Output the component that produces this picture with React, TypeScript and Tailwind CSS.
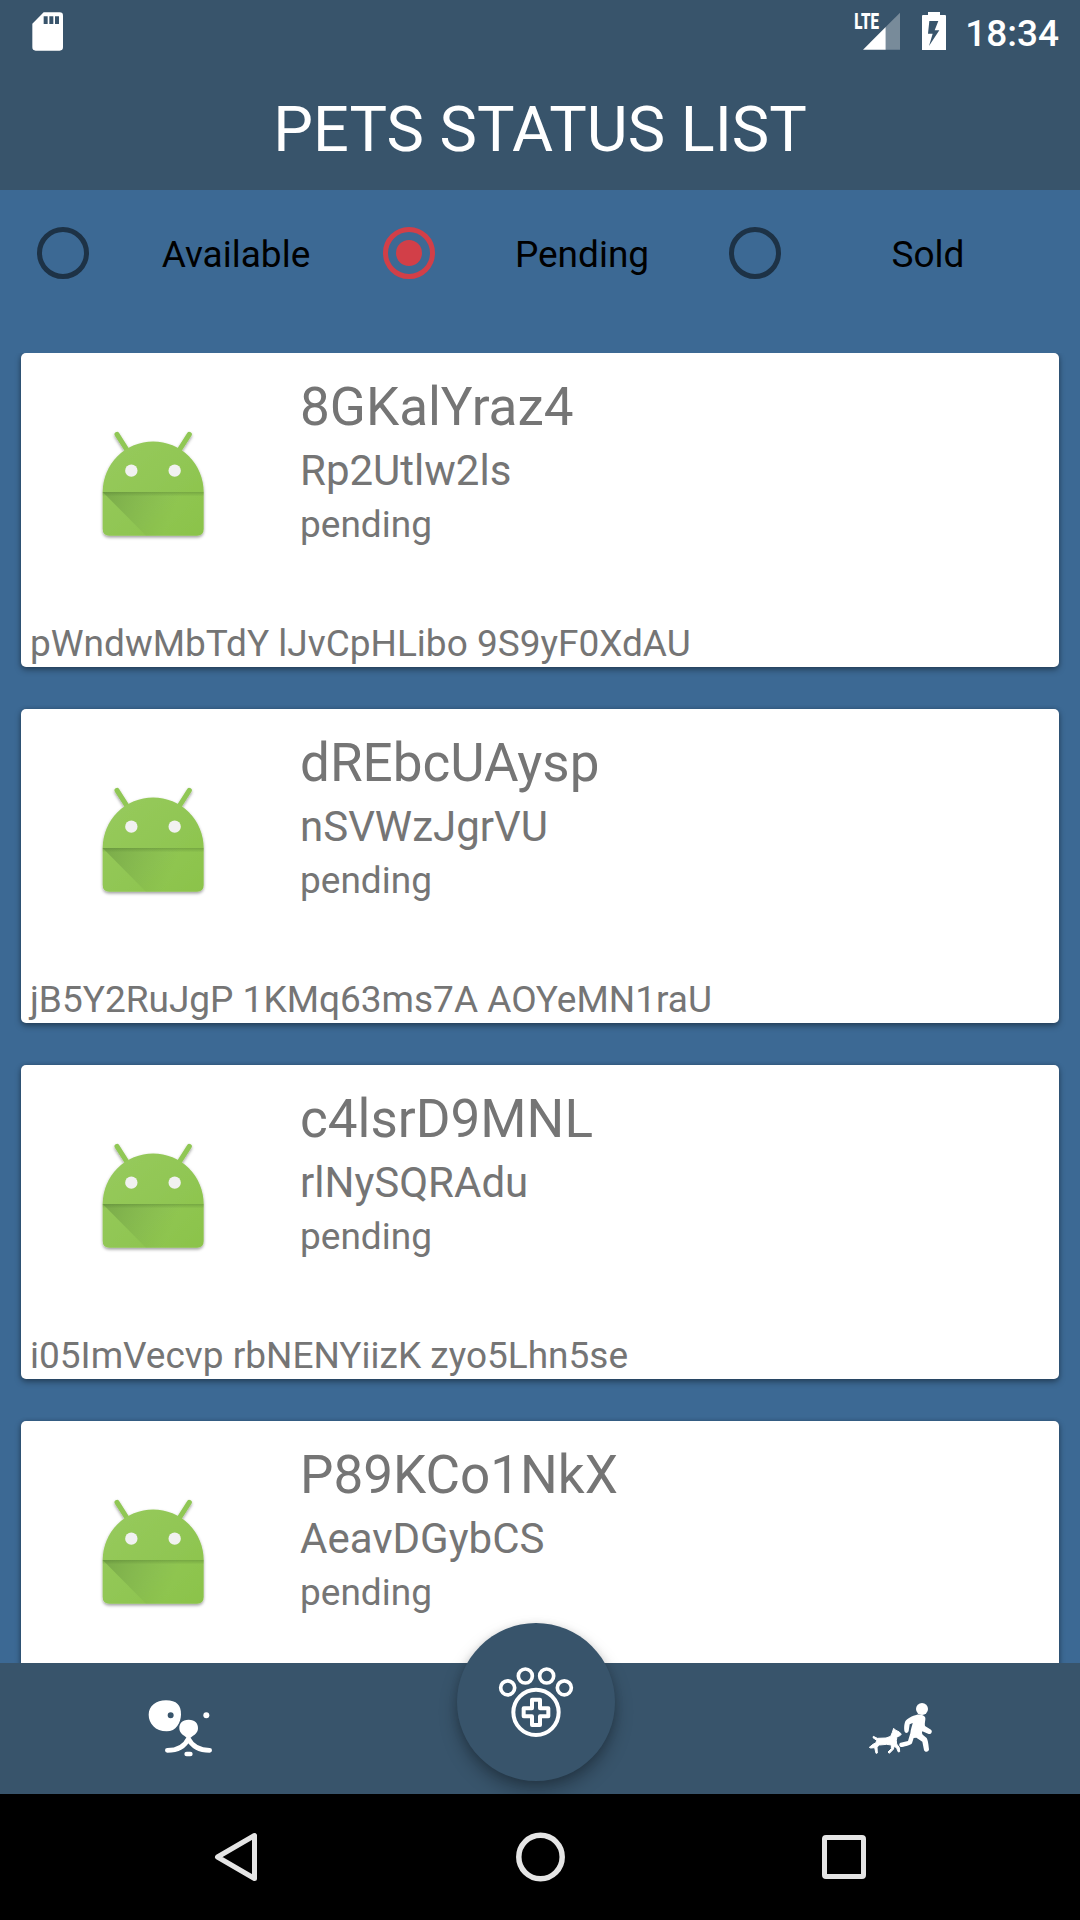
const pets = [
  { name: '8GKalYraz4', category: 'Rp2Utlw2ls', status: 'pending', tags: 'pWndwMbTdY lJvCpHLibo 9S9yF0XdAU' },
  { name: 'dREbcUAysp', category: 'nSVWzJgrVU', status: 'pending', tags: 'jB5Y2RuJgP 1KMq63ms7A AOYeMN1raU' },
  { name: 'c4lsrD9MNL', category: 'rlNySQRAdu', status: 'pending', tags: 'i05ImVecvp rbNENYiizK zyo5Lhn5se' },
  { name: 'P89KCo1NkX', category: 'AeavDGybCS', status: 'pending', tags: '' },
];

const filters = [
  { label: 'Available', checked: false },
  { label: 'Pending', checked: true },
  { label: 'Sold', checked: false },
];

function StatusBar() {
  return (
    <div className="flex h-[63px] items-start justify-between text-white">
      <svg className="ml-[30px] mt-[10px] h-[44px] w-[36px]" viewBox="90 30 108 132">
        <path
          fill="#fff"
          fillRule="evenodd"
          d="M131 37H179Q189 37 189 47V142Q189 152 179 152H107Q97 152 97 142V71ZM131 49V72H143V49ZM148 49V72H160V49ZM165 49V72H177V49Z"
        />
      </svg>
      <div className="flex items-start">
        <svg className="h-[54px] w-[54px] overflow-visible" viewBox="214 0 162 162">
          <text x="224" y="88" fill="#fff" fontFamily="Roboto" fontWeight="900" fontSize="68" textLength="74" lengthAdjust="spacingAndGlyphs">
            LTE
          </text>
          <path d="M318 81 361 38V149H318Z" fill="#fff" opacity="0.32" />
          <path d="M250 149 318 81V149Z" fill="#fff" />
        </svg>
        <svg className="ml-[15px] mt-[10px] h-[44px] w-[32px]" viewBox="420 30 96 132">
          <path
            fill="#fff"
            fillRule="evenodd"
            d="M444 36H480V45H495Q498 45 498 48V150H426V48Q426 45 429 45H444ZM448 63 444 101H458L447 138 478 91H464L475 63Z"
          />
        </svg>
        <span className="ml-[13px] mr-[21px] mt-[12px] text-[37px] font-medium leading-[43px]">18:34</span>
      </div>
    </div>
  );
}

function Radio({ checked }: { checked: boolean }) {
  return (
    <span
      className={
        checked
          ? 'flex size-[52px] items-center justify-center rounded-full border-[5px] border-[#d23f48]'
          : 'flex size-[52px] items-center justify-center rounded-full border-[5px] border-[#1d3246]'
      }
    >
      {checked && <span className="size-[26px] rounded-full bg-[#d23f48]" />}
    </span>
  );
}

function AndroidIcon() {
  return (
    <svg className="ml-[59px] mt-[57px] size-[150px] shrink-0" viewBox="0 0 450 450">
      <defs>
        <linearGradient id="face" x1="0" y1="0" x2="1" y2="1">
          <stop offset="0" stopColor="#97ca5e" />
          <stop offset="1" stopColor="#8bc34a" />
        </linearGradient>
        <linearGradient id="fold" x1="70" y1="246" x2="270" y2="330" gradientUnits="userSpaceOnUse">
          <stop offset="0" stopColor="#5f8c3c" stopOpacity="0.5" />
          <stop offset="1" stopColor="#6f9f42" stopOpacity="0" />
        </linearGradient>
        <linearGradient id="crease" x1="0" y1="0" x2="0" y2="1">
          <stop offset="0" stopColor="#527b30" stopOpacity="0.4" />
          <stop offset="1" stopColor="#527b30" stopOpacity="0" />
        </linearGradient>
        <filter id="drop" x="-10%" y="-10%" width="120%" height="125%">
          <feDropShadow dx="0" dy="5" stdDeviation="4" floodColor="#000" floodOpacity="0.38" />
        </filter>
      </defs>
      <g filter="url(#drop)">
        <path d="M111 73 141 120M328 73 298 120" stroke="#90c754" strokeWidth="15" strokeLinecap="round" />
        <path d="M68 246A151.500 151.500 0 0 1 371 246V357Q371 377 351 377H88Q68 377 68 357Z" fill="url(#face)" />
      </g>
      <path d="M68 246H371V330L324 377H198Z" fill="url(#fold)" />
      <rect x="68" y="246" width="303" height="13" fill="url(#crease)" />
      <circle cx="154" cy="182" r="18.500" fill="#f1f1f1" />
      <circle cx="284" cy="182" r="18.500" fill="#f1f1f1" />
    </svg>
  );
}

function DogFaceIcon() {
  return (
    <svg className="h-[90px] w-[100px]" viewBox="0 0 300 270">
      <path
        fill="#fff"
        fillRule="evenodd"
        d="M108 61C140 61 154 76 153 104C152 128 139 154 110 154C76 154 56 130 56 104C56 78 78 61 108 61ZM122 97A9 9 0 1 0 122 115A9 9 0 1 0 122 97Z"
      />
      <circle cx="229" cy="106" r="9" fill="#fff" />
      <path d="M176 119C196 119 204 130 204 145C204 160 191 166 182 173H170C161 166 148 160 148 145C148 130 156 119 176 119Z" fill="#fff" />
      <path d="M112 211C142 211 163 202 175 176C188 202 210 211 239 211" fill="none" stroke="#fff" strokeWidth="14" strokeLinecap="round" strokeLinejoin="round" />
      <rect x="163" y="215" width="25" height="14" rx="7" fill="#fff" />
    </svg>
  );
}

function WalkIcon() {
  return (
    <svg className="h-[90px] w-[100px]" viewBox="0 0 300 270" fill="#fff">
      <circle cx="216" cy="87" r="18" />
      <path d="M165 157C161 152 162 133 166 124C169 117 188 106 201 104C214 103 223 107 226 113C227 120 223 130 225 138L243 149C249 154 243 164 236 162L217 154C215 158 216 163 220 166L230 174C234 180 236 198 237 208C237 217 224 218 222 210L217 185L199 173L191 174L186 190C182 196 168 199 156 201C147 202 145 190 152 188L174 183L181 160C182 148 187 136 188 129L179 133L176 153C174 159 168 160 165 157Z" />
      <path
        d="M131 145 136 150 148 156 154 163 148 168 141 170 139 182 140 192 148 203 149 215 145 216 140 205 133 198 130 208 118 220 114 216 124 206 124 195 110 193 88 195 81 201 82 219 78 220 74 203 62 204 58 202 69 193 78 188 80 181 69 173 70 169 82 175 108 174 122 169 127 157Z"
        stroke="#fff"
        strokeWidth="3"
        strokeLinejoin="round"
      />
    </svg>
  );
}

function PawIcon() {
  return (
    <svg className="h-[72px] w-[76px]" viewBox="174 198 228 216" fill="none" stroke="#fff">
      <g strokeWidth="11">
        <circle cx="203" cy="263.500" r="21" />
        <circle cx="256" cy="228" r="21" />
        <circle cx="320" cy="228" r="21" />
        <circle cx="373" cy="263.500" r="21" />
      </g>
      <circle cx="288" cy="337" r="68" strokeWidth="12" />
      <path d="M276 299H300V325H325V349H300V375H276V349H251V325H276Z" strokeWidth="12" strokeLinejoin="round" />
    </svg>
  );
}

export default function App() {
  return (
    <div className="flex h-[1920px] w-[1080px] flex-col overflow-hidden bg-[#3c6994] font-['Roboto',sans-serif]">
      <header className="h-[190px] shrink-0 bg-[#38546b]">
        <StatusBar />
        <h1 className="mt-[30px] text-center text-[63px] leading-[74px] text-white">PETS STATUS LIST</h1>
      </header>

      <div className="flex h-[163px] shrink-0 pl-[37px] pt-[37px]">
        {filters.map((f) => (
          <div key={f.label} className="flex h-[52px] w-[346px] items-center">
            <Radio checked={f.checked} />
            <span className="w-[294px] pt-[2px] text-center text-[37px] leading-[43px] text-black">{f.label}</span>
          </div>
        ))}
      </div>

      <main className="flex min-h-0 flex-1 flex-col gap-[42px] overflow-hidden px-[21px]">
        {pets.map((p) => (
          <article
            key={p.name}
            className="flex h-[314px] shrink-0 flex-col justify-between rounded-[5px] bg-white pb-[2px] text-[#757575] shadow-[0_3px_6px_rgba(0,0,0,0.35),0_0_4px_rgba(0,0,0,0.18)]"
          >
            <div className="flex">
              <AndroidIcon />
              <div className="ml-[70px] mt-[23px]">
                <h2 className="text-[53px] leading-[62px]">{p.name}</h2>
                <p className="mt-[8px] text-[42px] leading-[49px]">{p.category}</p>
                <p className="mt-[8px] text-[37px] leading-[43px]">{p.status}</p>
              </div>
            </div>
            <p className="ml-[9px] text-[37px] leading-[43px]">{p.tags}</p>
          </article>
        ))}
      </main>

      <nav className="relative flex h-[131px] shrink-0 justify-between bg-[#38546b] px-[130px] pt-[17px]">
        <DogFaceIcon />
        <WalkIcon />
        <button className="absolute left-[457px] top-[-40px] flex size-[158px] justify-center rounded-full bg-[#38546b] pt-[43px] shadow-[0_10px_18px_rgba(0,0,0,0.28),0_2px_8px_rgba(0,0,0,0.14)]">
          <PawIcon />
        </button>
      </nav>

      <footer className="flex h-[126px] shrink-0 items-center justify-between bg-black pl-[212px] pr-[214px]">
        <svg className="h-[56px] w-[48px]" viewBox="0 0 48 56" fill="none" stroke="#e5e5e5" strokeWidth="5" strokeLinejoin="round">
          <path d="M42.500 6.500V49.500L5.500 28Z" />
        </svg>
        <svg className="size-[50px]" viewBox="0 0 50 50" fill="none" stroke="#e5e5e5" strokeWidth="5.500">
          <circle cx="24.500" cy="25" r="21.700" />
        </svg>
        <span className="size-[44px] rounded-[4px] border-[5px] border-[#e5e5e5]" />
      </footer>
    </div>
  );
}
